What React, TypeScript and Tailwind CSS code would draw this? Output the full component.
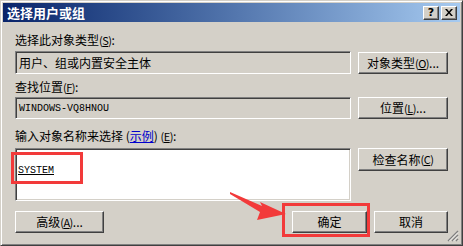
import React from "react";

const font = { fontFamily: '"Noto Sans CJK SC", "Noto Sans", sans-serif' };
const mono = { fontFamily: '"Liberation Mono", "DejaVu Sans Mono", monospace' };

function Btn({ children, className = "" }: { children: React.ReactNode; className?: string }) {
  return (
    <div
      className={
        "flex items-center justify-center border border-t-white border-l-white border-b-[#404040] border-r-[#404040] bg-[#d4d0c8] text-[12px] leading-none text-black shadow-[inset_-1px_-1px_0_#808080,inset_1px_1px_0_#d4d0c8] " +
        className
      }
    >
      {children}
    </div>
  );
}

function Acc({ c }: { c: string }) {
  return (
    <span className="text-[11px] tracking-[-0.5px]">
      (<span className="underline underline-offset-1">{c}</span>)
    </span>
  );
}

export default function App() {
  return (
    <div
      style={font}
      className="relative w-[463px] h-[246px] overflow-hidden bg-[#d4d0c8] border border-t-[#d4d0c8] border-l-[#d4d0c8] border-b-[#404040] border-r-[#404040] shadow-[inset_1px_1px_0_#ffffff,inset_-1px_-1px_0_#808080] p-[2px] select-none"
    >
      {/* title bar */}
      <div className="flex h-[19px] items-center bg-gradient-to-r from-[#0a246a] to-[#a6caf0] pl-[4px] pr-[3px]">
        <span className="text-[13px] font-bold leading-none text-white">选择用户或组</span>
        <div className="ml-auto flex gap-[2px]">
          <div className="flex h-[14px] w-[16px] items-center justify-center border border-t-white border-l-white border-b-[#404040] border-r-[#404040] bg-[#d4d0c8] shadow-[inset_-1px_-1px_0_#808080]">
            <span className="text-[11px] font-bold leading-none text-black" style={{ fontFamily: '"DejaVu Sans", sans-serif' }}>?</span>
          </div>
          <div className="flex h-[14px] w-[16px] items-center justify-center border border-t-white border-l-white border-b-[#404040] border-r-[#404040] bg-[#d4d0c8] shadow-[inset_-1px_-1px_0_#808080]">
            <svg width="8" height="7" viewBox="0 0 8 7">
              <path d="M0 0h2l2 2.5L6 0h2L5 3.5 8 7H6L4 4.5 2 7H0l3-3.5z" fill="#000" />
            </svg>
          </div>
        </div>
      </div>

      {/* content */}
      <div className="flex flex-col pl-[12px]">
        <div className="mt-[11px] h-[14px] text-[12px] leading-[14px] text-black">
          选择此对象类型<Acc c="S" />:
        </div>
        <div className="mt-[4px] flex gap-[7px]">
          <div className="flex h-[23px] w-[336px] items-center border border-t-[#808080] border-l-[#808080] border-b-white border-r-white bg-[#d4d0c8] pl-[3px] text-[12px] text-black shadow-[inset_1px_1px_0_#404040,inset_-1px_-1px_0_#d4d0c8]">
            用户、组或内置安全主体
          </div>
          <Btn className="mt-[1px] h-[22px] w-[90px]">
            对象类型<Acc c="O" />...
          </Btn>
        </div>

        <div className="mt-[6px] h-[14px] text-[12px] leading-[14px] text-black">
          查找位置<Acc c="F" />:
        </div>
        <div className="mt-[3px] flex gap-[7px]">
          <div className="flex h-[22px] w-[336px] items-center border border-t-[#808080] border-l-[#808080] border-b-white border-r-white bg-[#d4d0c8] pl-[3px] text-black shadow-[inset_1px_1px_0_#404040,inset_-1px_-1px_0_#d4d0c8]">
            <span className="text-[10px]" style={mono}>WINDOWS-VQ8HNOU</span>
          </div>
          <Btn className="h-[22px] w-[90px]">
            位置<Acc c="L" />...
          </Btn>
        </div>

        <div className="mt-[10px] h-[14px] text-[12px] leading-[14px] text-black">
          输入对象名称来选择 (<span className="text-[#0000cc] underline underline-offset-1">示例</span>) <Acc c="E" />:
        </div>
        <div className="mt-[5px] flex gap-[7px]">
          <div className="h-[53px] w-[336px] border border-t-[#808080] border-l-[#808080] border-b-white border-r-white bg-white pl-[2px] pt-[5px] shadow-[inset_1px_1px_0_#404040,inset_-1px_-1px_0_#d4d0c8]">
            <span className="text-[10px] text-black underline underline-offset-1" style={mono}>
              SYSTEM
            </span>
          </div>
          <Btn className="h-[23px] w-[90px]">
            检查名称<Acc c="C" />
          </Btn>
        </div>

        <div className="mt-[10px] flex">
          <Btn className="h-[22px] w-[89px]">
            高级<Acc c="A" />...
          </Btn>
          <Btn className="ml-[188px] h-[22px] w-[75px]">确定</Btn>
          <Btn className="ml-[7px] h-[22px] w-[74px]">取消</Btn>
        </div>
      </div>

      {/* size grip */}
      <svg className="absolute right-[3px] bottom-[3px]" width="12" height="12" viewBox="0 0 12 12">
        <path d="M11 1L1 11M11 5L5 11M11 9L9 11" stroke="#808080" strokeWidth="1.4" />
        <path d="M11 2.5L2.5 11M11 6.5L6.5 11M11 10.5L10.5 11" stroke="#ffffff" strokeWidth="0.8" />
      </svg>

      {/* annotations */}
      <div className="absolute left-[10px] top-[151px] h-[32px] w-[72px] border-[3px] border-[#f23a3a]" />
      <div className="absolute left-[281px] top-[202px] h-[34px] w-[88px] border-[3px] border-[#f23a3a]" />
      <svg className="absolute left-0 top-0" width="463" height="246" viewBox="0 0 463 246">
        <polygon points="229,191 261,205 259,201 285,213 256,219 259,211 229,193" fill="#f23a3a" />
      </svg>
    </div>
  );
}
